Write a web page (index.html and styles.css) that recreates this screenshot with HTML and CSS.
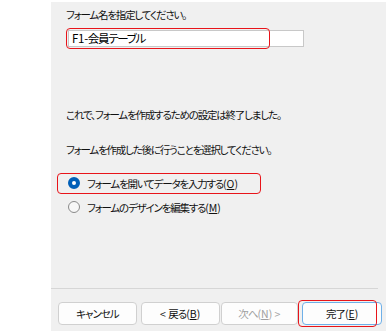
FILE: index.html
```html
<!doctype html>
<html>
  <head>
    <meta charset="utf-8" />
    <title>フォーム ウィザード</title>
    <link rel="stylesheet" href="styles.css">
  </head>
  <body>
    <div class="panel">
      <p class="label first">フォーム名を指定してください。</p>
      <div class="name-field">
        <div class="textbox"><span class="latin">F1-</span>会員テーブル</div>
        <span class="mark mark-name"></span>
      </div>

      <p class="label done">これで、フォームを作成するための設定は終了しました。</p>
      <p class="label next-step">フォームを作成した後に行うことを選択してください。</p>

      <div class="options">
        <label class="option checked">
          <span class="radio"></span>
          <span>フォームを開いてデータを入力する<span class="latin">(<u>O</u>)</span></span>
          <span class="mark mark-option"></span>
        </label>
        <label class="option">
          <span class="radio"></span>
          <span>フォームのデザインを編集する<span class="latin">(<u>M</u>)</span></span>
        </label>
      </div>

      <hr class="separator">

      <div class="buttons">
        <button class="btn">キャンセル</button>
        <button class="btn back"><span class="latin">&lt; </span>戻る<span class="latin">(<u>B</u>)</span></button>
        <button class="btn disabled">次へ<span class="latin">(<u>N</u>) &gt;</span></button>
        <button class="btn primary">完了<span class="latin">(<u>E</u>)</span><span class="mark mark-finish"></span></button>
      </div>
    </div>
  </body>
</html>
```

FILE: styles.css
```css
body {
  margin: 0;
  background: #ffffff;
  font-family: "Noto Sans CJK JP", "Noto Sans", sans-serif;
  font-size: 10.5px;
  letter-spacing: -1.2px;
  color: #111;
  font-feature-settings: "palt";
}

.latin {
  letter-spacing: 0;
}

.panel {
  margin: 2px 0 0 51px;
  height: 329px;
  background: #f0f0f0;
  padding-left: 15px;
  box-sizing: border-box;
  padding-top: 5px;
}

.label {
  margin: 0;
  line-height: 16px;
}

.name-field {
  position: relative;
  margin-top: 7px;
  margin-left: 2px;
  width: 236px;
}

.textbox {
  height: 17px;
  box-sizing: border-box;
  border: 1px solid #c8c8c8;
  background: #fff;
  font-size: 11.5px;
  letter-spacing: -1.3px;
  line-height: 15px;
  padding-left: 3px;
  color: #000;
}

.textbox .latin {
  letter-spacing: -0.3px;
}

.mark {
  position: absolute;
  border: 1px solid #e8141a;
  border-radius: 4px;
  pointer-events: none;
}

.mark-name {
  left: -2px;
  top: -2px;
  width: 202px;
  height: 19px;
}

.done {
  margin-top: 60px;
}

.next-step {
  margin-top: 19px;
}

.options {
  margin-top: 15px;
}

.option {
  position: relative;
  display: flex;
  align-items: center;
  height: 20px;
  padding-left: 2px;
}

.option + .option {
  margin-top: 4px;
}

.radio {
  width: 12px;
  height: 12px;
  box-sizing: border-box;
  border-radius: 50%;
  border: 1px solid #8a8a8a;
  background: #f7f7f7;
  margin-right: 7px;
}

.checked .radio {
  border: 4px solid #005fb8;
  background: #fff;
}

.mark-option {
  left: -9px;
  top: 0;
  width: 202px;
  height: 19px;
}

.separator {
  margin: 71px 0 0 -15px;
  width: 327px;
  border: none;
  border-top: 1px solid #d6d6d6;
}

.buttons {
  display: flex;
  margin-top: 13px;
  margin-left: -8px;
}

.btn {
  position: relative;
  height: 23px;
  width: 79px;
  box-sizing: border-box;
  border: 1px solid #d0d0d0;
  border-radius: 4px;
  background: #fdfdfd;
  font-family: inherit;
  font-size: 10.5px;
  letter-spacing: -1px;
  color: #111;
  padding: 0;
  margin-right: 4px;
  font-feature-settings: "palt";
}

.back {
  margin-right: 1px;
}

.disabled {
  width: 78px;
  color: #a0a0a0;
}

.primary {
  width: 80px;
  border-color: #6fb0e8;
}

.mark-finish {
  left: -5px;
  top: -3px;
  width: 77px;
  height: 25px;
}
```
